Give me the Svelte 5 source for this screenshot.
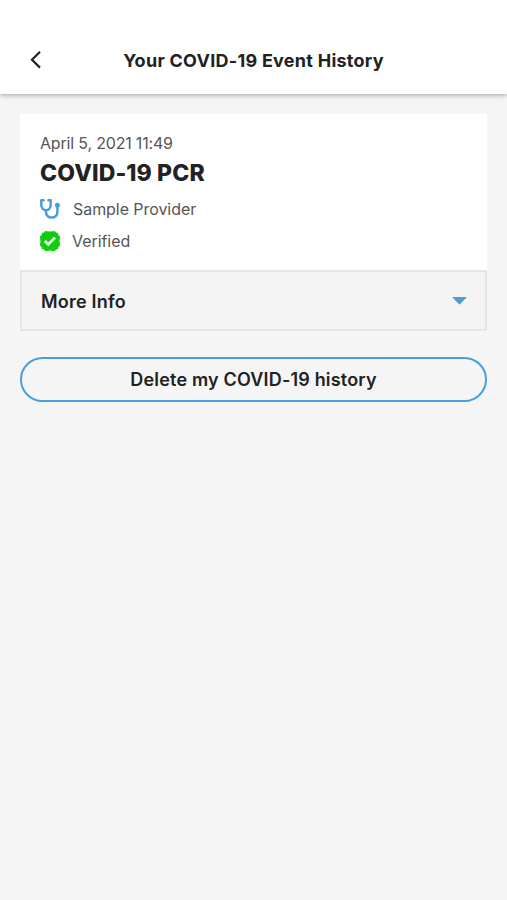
<script>
  let events = [
    { id: 1, date: "April 5, 2021 11:49", name: "COVID-19 PCR", provider: "Sample Provider", status: "Verified" }
  ];
  let openId = null;

  function toggleInfo(id) {
    openId = openId === id ? null : id;
  }

  function clearHistory() {
    events = [];
  }
</script>

<main>
  <header class="top-bar">
    <button class="back" aria-label="Back">
      <svg width="12" height="20" viewBox="0 0 12 20">
        <path d="M11 1.8 L3 9.7 L11 17.6" />
      </svg>
    </button>
    <h1>Your COVID-19 Event History</h1>
  </header>

  <div class="content">
    {#each events as event (event.id)}
      <section class="card">
        <div class="card-body">
          <p class="date">{event.date}</p>
          <h2>{event.name}</h2>
          <div class="row provider">
            <svg width="20" height="20" viewBox="0 0 20 20">
              <path class="tube" d="M3.6 1.3 H1.3 V5.8 C1.3 9 3.3 11.2 6 11.2 C8.7 11.2 10.7 9 10.7 5.8 V1.3 H8.4" />
              <path class="tube" d="M6 11.2 V12.8 C6 16.4 8.4 18.5 11.7 18.5 C15 18.5 17.4 16.4 17.4 12.8 V7" />
              <circle cx="17.4" cy="6.3" r="2.5" fill="#4a9edb" />
            </svg>
            <span>{event.provider}</span>
          </div>
          <div class="row verified">
            <svg width="20" height="20" viewBox="0 0 20 20">
              <path
                fill="#10ce0d"
                d="M5.4 0 Q7 0 10 0.6 Q13 0 14.6 0 L16.4 1.7 H18.1 V3.6 L20 5.4 Q20 7 19.5 10 Q20 13 20 14.6 L18.1 16.4 V18.3 H16.4 L14.6 20 Q13 20 10 19.4 Q7 20 5.4 20 L3.6 18.3 H1.9 V16.4 L0 14.6 Q0 13 0.5 10 Q0 7 0 5.4 L1.9 3.6 V1.7 H3.6 Z"
              />
              <path class="check" d="M4.9 10 L8.3 13.4 L14.9 6.6" />
            </svg>
            <span>{event.status}</span>
          </div>
        </div>
        <button class="more" aria-expanded={openId === event.id} onclick={() => toggleInfo(event.id)}>
          <span>More Info</span>
          <svg width="15" height="8" viewBox="0 0 15 8">
            <path fill="#4a9edb" d="M0.5 0 H14.5 Q15 0 14.5 0.6 L8.2 7.1 Q7.5 7.7 6.8 7.1 L0.5 0.6 Q0 0 0.5 0 Z" />
          </svg>
        </button>
      </section>
    {/each}

    <button class="delete" onclick={clearHistory}>Delete my COVID-19 history</button>
  </div>
</main>

<style>
  :global(body) {
    margin: 0;
    background: #f5f5f5;
    color: #222222;
    font-family: Inter, "Open Sans", sans-serif;
  }

  main {
    min-height: 100vh;
  }

  button {
    font: inherit;
    color: inherit;
    cursor: pointer;
  }

  svg {
    display: block;
    flex: none;
  }

  /* HEADER */
  .top-bar {
    box-sizing: border-box;
    height: 94px;
    padding: 26px 29px 0;
    display: grid;
    grid-template-columns: 40px 1fr 40px;
    align-items: center;
    background: #ffffff;
    box-shadow: 0 1px 5px rgba(0, 0, 0, 0.35);
  }

  .back {
    width: 12px;
    padding: 0;
    border: none;
    background: none;
  }

  .back path {
    fill: none;
    stroke: #222222;
    stroke-width: 2.2;
  }

  h1 {
    margin: 0;
    padding-top: 1px;
    font-size: 18px;
    line-height: 24px;
    font-weight: 700;
    letter-spacing: 0.26px;
    text-align: center;
    white-space: nowrap;
  }

  .content {
    padding: 20px 20px 0;
  }

  /* CARD */
  .card-body {
    box-sizing: border-box;
    height: 156px;
    padding: 19px 20px 0;
    background: #ffffff;
  }

  .date {
    margin: 0;
    font-size: 16px;
    line-height: 20px;
    letter-spacing: -0.18px;
    color: #555555;
  }

  h2 {
    margin: 6px 0 0;
    font-size: 23px;
    line-height: 28px;
    font-weight: 800;
    letter-spacing: 0.12px;
  }

  .row {
    display: flex;
    align-items: center;
    height: 20px;
    font-size: 16px;
    letter-spacing: -0.06px;
    color: #555555;
  }

  .provider {
    margin-top: 12px;
    gap: 13px;
  }

  .verified {
    margin-top: 12px;
    gap: 12px;
  }

  .tube {
    fill: none;
    stroke: #4a9edb;
    stroke-width: 2.5;
    stroke-linecap: round;
    stroke-linejoin: round;
  }

  .check {
    fill: none;
    stroke: #ffffff;
    stroke-width: 2.7;
  }

  .more {
    box-sizing: border-box;
    display: flex;
    align-items: center;
    justify-content: space-between;
    width: 100%;
    height: 61px;
    padding: 1px 18px 0 19px;
    border: 2px solid #e5e5e5;
    background: #f4f4f4;
    font-size: 18px;
    font-weight: 600;
    letter-spacing: 0.2px;
  }

  /* DELETE */
  .delete {
    box-sizing: border-box;
    display: block;
    width: 100%;
    height: 45px;
    margin-top: 26px;
    padding: 0;
    border: 2px solid #4a9edb;
    border-radius: 23px;
    background: none;
    font-size: 18px;
    font-weight: 600;
    letter-spacing: 0.18px;
  }
</style>
